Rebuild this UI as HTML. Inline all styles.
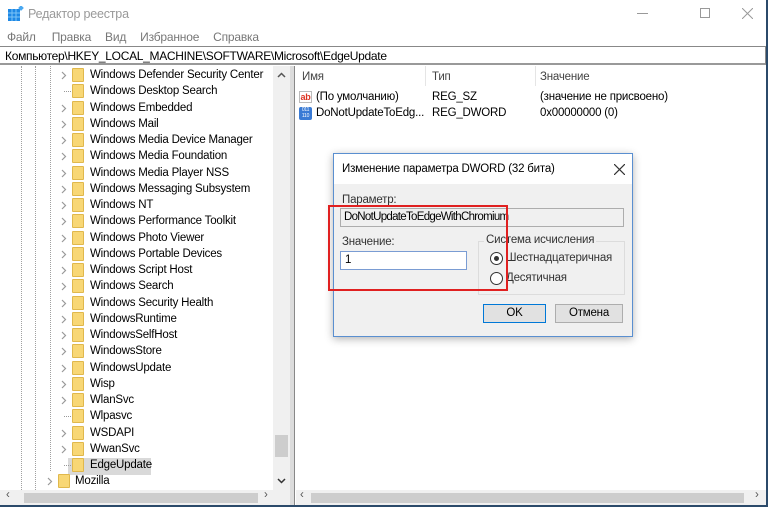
<!DOCTYPE html>
<html><head><meta charset="utf-8"><style>
*{margin:0;padding:0;box-sizing:border-box}
body{width:768px;height:507px;overflow:hidden;background:#fff;font-family:"Liberation Sans",sans-serif;font-size:11.5px;letter-spacing:-0.2px;color:#000;position:relative}
.a{position:absolute;white-space:nowrap}
.menu span{margin-right:16px}
.row{position:absolute;height:16px;line-height:16px}
.fold{position:absolute;width:12px;height:14px;background:#f8d775;border:1px solid #e0b84c;border-radius:1px}
.arr{position:absolute;color:#999;font-size:10px;transform:scaleX(0.7)}
.vd{position:absolute;border-left:1px dotted #a0a0a0;top:66px;height:424px}
</style></head><body>
<div class="a" style="right:0;top:0;width:2px;height:507px;background:#2b4a6a"></div>
<div class="a" style="left:0;bottom:0;width:768px;height:2px;background:#2b4a6a"></div>
<svg class="a" style="left:8px;top:6px" width="16" height="16"><rect x="0" y="3" width="12" height="12" fill="#1e88e5"/><g stroke="#7cc4f8" stroke-width="1"><line x1="4" y1="3" x2="4" y2="15"/><line x1="8" y1="3" x2="8" y2="15"/><line x1="0" y1="7" x2="12" y2="7"/><line x1="0" y1="11" x2="12" y2="11"/></g><rect x="11" y="0" width="4" height="4" fill="#4aa8f0" transform="rotate(45 13 2)"/></svg>
<div class="a" style="left:28px;top:7px;font-size:12.5px;color:#999">Редактор реестра</div>
<div class="a" style="left:637px;top:13px;width:11px;height:1px;background:#999"></div>
<div class="a" style="left:700px;top:8px;width:10px;height:10px;border:1px solid #999"></div>
<svg class="a" style="left:742px;top:8px" width="11" height="11"><path d="M0 0L11 11M11 0L0 11" stroke="#999" stroke-width="1"/></svg>
<div class="a menu" style="left:7px;top:30px;color:#777;font-size:12px"><span>Файл</span><span style="margin-right:14px">Правка</span><span style="margin-right:14px">Вид</span><span style="margin-right:14px">Избранное</span><span>Справка</span></div>
<div class="a" style="left:0;top:46px;width:766px;height:19px;border-top:1px solid #888;border-bottom:2px solid #999;border-right:1px solid #888"></div>
<div class="a" style="left:5px;top:49px;font-size:12px;letter-spacing:-0.3px">Компьютер\HKEY_LOCAL_MACHINE\SOFTWARE\Microsoft\EdgeUpdate</div>
<div class="vd" style="left:21px"></div><div class="vd" style="left:35px"></div><div class="vd" style="left:50px;height:405px"></div>
<div class="a" style="left:68px;top:458px;width:83px;height:17px;background:#d9d9d9"></div>
<div id="tree"></div>
<div class="a" style="left:273px;top:66px;width:17px;height:424px;background:#f0f0f0"></div>
<svg class="a" style="left:277px;top:72px" width="9" height="6"><path d="M1 5L4.5 1.5L8 5" stroke="#555" stroke-width="1.5" fill="none"/></svg>
<div class="a" style="left:275px;top:435px;width:13px;height:22px;background:#cdcdcd"></div>
<svg class="a" style="left:277px;top:478px" width="9" height="6"><path d="M1 1L4.5 4.5L8 1" stroke="#333" stroke-width="1.5" fill="none"/></svg>
<div class="a" style="left:0;top:490px;width:290px;height:15px;background:#f0f0f0"></div>
<div class="a" style="left:24px;top:493px;width:234px;height:10px;background:#cdcdcd"></div>
<div class="a" style="left:6px;top:489px;color:#555">‹</div><div class="a" style="left:264px;top:489px;color:#555">›</div>
<div class="a" style="left:290px;top:66px;width:5px;height:439px;background:#dcdcdc;border-right:1px solid #888"></div>
<div class="a" style="left:302px;top:71px;color:#444">Имя</div>
<div class="a" style="left:425px;top:66px;width:1px;height:20px;background:#e5e5e5"></div>
<div class="a" style="left:432px;top:71px;color:#444">Тип</div>
<div class="a" style="left:535px;top:66px;width:1px;height:20px;background:#e5e5e5"></div>
<div class="a" style="left:540px;top:71px;color:#444">Значение</div>
<div class="a" style="left:299px;top:91px;width:13px;height:12px;border:1px solid #bbb;font-size:9px;font-weight:bold;color:#d32;line-height:10px;text-align:center">ab</div>
<div class="a" style="left:316px;top:91px">(По умолчанию)</div>
<div class="a" style="left:432px;top:91px">REG_SZ</div>
<div class="a" style="left:540px;top:91px">(значение не присвоено)</div>
<div class="a" style="left:299px;top:107px;width:13px;height:13px;background:#3a7bd5;border-radius:2px;font-size:5px;color:#fff;line-height:6px;text-align:center">011<br>110</div>
<div class="a" style="left:316px;top:107px">DoNotUpdateToEdg...</div>
<div class="a" style="left:432px;top:107px">REG_DWORD</div>
<div class="a" style="left:540px;top:107px">0x00000000 (0)</div>
<div class="a" style="left:296px;top:490px;width:470px;height:15px;background:#f0f0f0"></div>
<div class="a" style="left:311px;top:493px;width:433px;height:10px;background:#cdcdcd"></div>
<div class="a" style="left:300px;top:489px;color:#555">‹</div><div class="a" style="left:755px;top:489px;color:#555">›</div>
<div class="a" style="left:333px;top:153px;width:300px;height:184px;background:#f0f0f0;border:1px solid #5a8fd0;box-shadow:0 2px 8px rgba(0,0,0,.3)"></div>
<div class="a" style="left:334px;top:154px;width:298px;height:30px;background:#fff"></div>
<div class="a" style="left:342px;top:163px">Изменение параметра DWORD (32 бита)</div>
<svg class="a" style="left:614px;top:164px" width="11" height="11"><path d="M0 0L11 11M11 0L0 11" stroke="#333" stroke-width="1.2"/></svg>
<div class="a" style="left:342px;top:194px;color:#333">Параметр:</div>
<div class="a" style="left:340px;top:208px;width:284px;height:19px;background:#f0f0f0;border:1px solid #adadad"></div>
<div class="a" style="left:344px;top:211px;font-size:11.5px;letter-spacing:-0.7px">DoNotUpdateToEdgeWithChromium</div>
<div class="a" style="left:342px;top:236px;color:#333">Значение:</div>
<div class="a" style="left:340px;top:251px;width:127px;height:19px;background:#fff;border:1px solid #7a9cd3"></div>
<div class="a" style="left:345px;top:254px">1</div>
<div class="a" style="left:478px;top:241px;width:147px;height:54px;border:1px solid #dcdcdc"></div>
<div class="a" style="left:484px;top:234px;background:#f0f0f0;padding:0 2px;color:#333">Система исчисления</div>
<div class="a" style="left:490px;top:252px;width:13px;height:13px;border:1px solid #333;border-radius:50%;background:#fff"></div>
<div class="a" style="left:494px;top:256px;width:5px;height:5px;border-radius:50%;background:#333"></div>
<div class="a" style="left:506px;top:252px;color:#333">Шестнадцатеричная</div>
<div class="a" style="left:490px;top:272px;width:13px;height:13px;border:1px solid #333;border-radius:50%;background:#fff"></div>
<div class="a" style="left:506px;top:272px;color:#333">Десятичная</div>
<div class="a" style="left:483px;top:304px;width:63px;height:19px;background:#e1e1e1;border:1px solid #0078d7;text-align:center;line-height:17px">OK</div>
<div class="a" style="left:555px;top:304px;width:68px;height:19px;background:#e1e1e1;border:1px solid #adadad;text-align:center;line-height:17px">Отмена</div>
<div class="a" style="left:328px;top:205px;width:180px;height:86px;border:2px solid #e02020"></div>
<script>
var items=["Windows Defender Security Center","Windows Desktop Search","Windows Embedded","Windows Mail","Windows Media Device Manager","Windows Media Foundation","Windows Media Player NSS","Windows Messaging Subsystem","Windows NT","Windows Performance Toolkit","Windows Photo Viewer","Windows Portable Devices","Windows Script Host","Windows Search","Windows Security Health","WindowsRuntime","WindowsSelfHost","WindowsStore","WindowsUpdate","Wisp","WlanSvc","Wlpasvc","WSDAPI","WwanSvc","EdgeUpdate"];
var noArr={1:1,21:1,24:1},h="";
items.forEach(function(t,i){var y=67+i*16.25;
h+='<div class="fold" style="left:72px;top:'+(y+1)+'px"></div>';
if(noArr[i])h+='<div class="a" style="left:64px;top:'+(y+8)+'px;width:7px;border-top:1px dotted #999"></div>';
else h+='<svg class="a" style="left:61px;top:'+(y+4)+'px" width="6" height="9"><path d="M1 1L4.5 4.5L1 8" stroke="#999" stroke-width="1.2" fill="none"/></svg>';
h+='<div class="row" style="left:90px;top:'+y+'px">'+t+'</div>';});
var y=67+25*16.25;
h+='<div class="fold" style="left:58px;top:'+(y+1)+'px"></div><svg class="a" style="left:47px;top:'+(y+4)+'px" width="6" height="9"><path d="M1 1L4.5 4.5L1 8" stroke="#999" stroke-width="1.2" fill="none"/></svg><div class="row" style="left:75px;top:'+y+'px">Mozilla</div>';
document.getElementById("tree").innerHTML=h;
</script>
</body></html>
